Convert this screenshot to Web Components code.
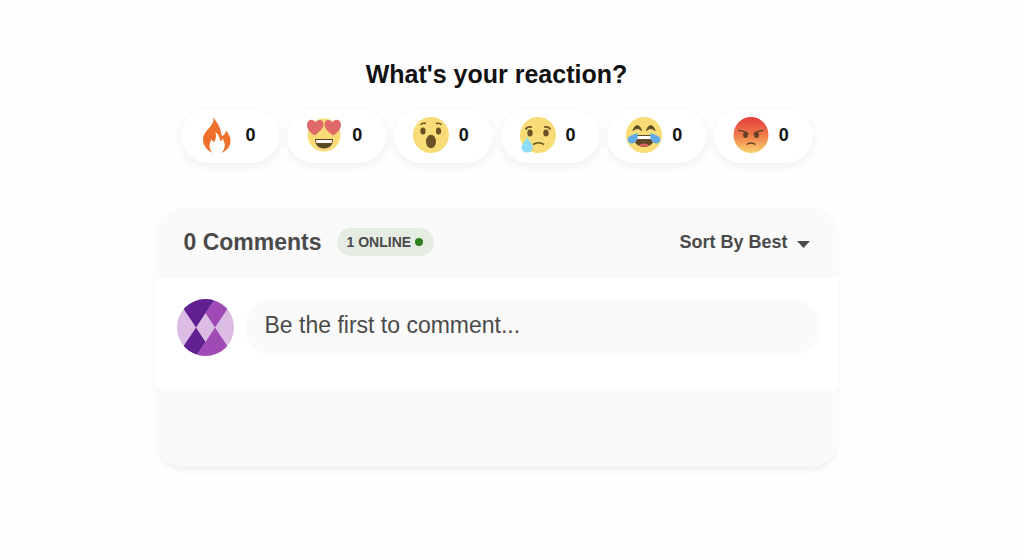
<!DOCTYPE html>
<html lang="en">
<head>
<meta charset="utf-8">
<meta name="viewport" content="width=device-width, initial-scale=1">
<title>Comments</title>
<style>
body {
    margin: 0;
    padding: 59px 31px 40px 0;
    background-color: #fefefe;
    color: #111;
    font-family: "Liberation Sans", Arial, sans-serif;
}
</style>
</head>
<body>

<comments-widget>
    <reaction-bar slot="reactions">
        <span slot="title">What's your reaction?</span>

        <reaction-button count="0" label="Fire">
            <svg viewBox="0 0 36 36">
                <path fill="#ee702a" d="M13.500 0C14.500 3 18 6 19.500 10C21 13 21 17 22 19C24.500 18.500 25.500 16 26 13.500C29 17 31 21 30.500 25C30 30 26.500 33.500 22.500 35.500L12 35.500C6.500 33 3 28 3 22.500C3 17 6.500 14 9.500 10.500C12.500 7 14 4 13.500 0Z"/>
                <path fill="#fff" d="M15.500 15C18 17 20 20 20 24C21.500 24 22 23 22.500 21.500C25 25 25.500 29 24 32C23.500 33.500 22.500 35 21.500 36L12.500 36C9.500 33 9 29 10 26C10.500 24.500 11 23.500 11.500 22C12 23.500 12.500 24.500 14 25C16 22 16.500 19 15.500 15Z"/>
            </svg>
        </reaction-button>

        <reaction-button count="0" label="Love">
            <svg viewBox="0 0 36 36">
                <circle cx="18" cy="18" r="16.500" fill="#f8dc78"/>
                <path fill="#e06a69" d="M8.500 18.500C4 15.500 .5 12 1 7C2 1.500 7.500 1.500 9.500 5.500C12.500 1 18 3 17.500 8C16.500 12.500 12 16 8.500 18.500Z"/>
                <path fill="#e06a69" d="M27.500 18.500C23.500 16 19 12.500 18.500 8C18 3 23.500 1 26.500 5.500C28.500 1.500 34 1.500 35 7C35.500 12 31.500 15.500 27.500 18.500Z"/>
                <path fill="#5b4925" d="M9 22H27C27 27.500 24 31.500 18 31.500C12 31.500 9 27.500 9 22Z"/>
                <path fill="#fff" d="M10 23H26L25.500 26H10.500Z"/>
            </svg>
        </reaction-button>

        <reaction-button count="0" label="Surprised">
            <svg viewBox="0 0 36 36">
                <circle cx="18" cy="18" r="18" fill="#f8dc78"/>
                <g fill="#6a5226">
                    <ellipse cx="10" cy="14" rx="2.600" ry="3.600"/>
                    <ellipse cx="25.500" cy="14" rx="2.600" ry="3.600"/>
                    <ellipse cx="18" cy="24.500" rx="5" ry="6.700"/>
                </g>
                <path d="M7.500 8Q9 5.500 13 6.500M23 6.500Q27 5.500 28.500 8" fill="none" stroke="#6a5226" stroke-width="1.400"/>
            </svg>
        </reaction-button>

        <reaction-button count="0" label="Sad">
            <svg viewBox="0 0 36 36">
                <circle cx="18" cy="18" r="18" fill="#f8dc78"/>
                <g fill="#6a5226">
                    <ellipse cx="10" cy="16" rx="2.700" ry="3.400"/>
                    <ellipse cx="26" cy="16" rx="2.700" ry="3.400"/>
                </g>
                <path d="M5.500 12.500Q7.500 9 12 10M24 10Q28.500 9 30.500 12.500M13 27.500Q18.500 24 24 27.500" fill="none" stroke="#6a5226" stroke-width="1.700"/>
                <path fill="#8edcf8" d="M7.500 20C9 24 12.500 26 12.500 30.500C12.500 33.500 10 35.500 7.500 35.500C4 35.500 1.500 33.500 1.500 30.500C1.500 26.500 6 24 7.500 20Z"/>
            </svg>
        </reaction-button>

        <reaction-button count="0" label="Funny">
            <svg viewBox="0 0 36 36">
                <circle cx="18" cy="18" r="18" fill="#f8dc78"/>
                <path d="M7 13.500C9 7 13.500 7 15.500 13.500Q11 9.500 7 13.500ZM20.500 13.500C22.500 7 27 7 29 13.500Q25 9.500 20.500 13.500Z" fill="#5e4a28" stroke="#5e4a28" stroke-linejoin="round"/>
                <path fill="#5e4a28" d="M8 18H28C29 25 25 30 18 30C11 30 7 25 8 18Z"/>
                <path fill="#fff" d="M10 19H26V22H10Z"/>
                <path fill="#df625e" d="M12.500 28Q18 25 23.500 28Q18 31 12.500 28Z"/>
                <path fill="#62ace8" d="M11.500 16C12.500 21 10.500 26 6 26.500C3 26.500 1 24 2 21C3.500 18 8 17.500 11.500 16ZM24.500 16C28 17.500 32.500 18 34 21C35 24 33 26.500 30 26.500C25.500 26 23.500 21 24.500 16Z"/>
            </svg>
        </reaction-button>

        <reaction-button count="0" label="Angry">
            <svg viewBox="0 0 36 36">
                <defs>
                    <linearGradient id="anger" x1="0" y1="0" x2="0" y2="1">
                        <stop offset="0.050" stop-color="#e6433d"/>
                        <stop offset="0.500" stop-color="#ef7a49"/>
                        <stop offset="1" stop-color="#f9d36d"/>
                    </linearGradient>
                </defs>
                <ellipse cx="18" cy="18" rx="17.500" ry="18" fill="url(#anger)"/>
                <g fill="#64412a">
                    <ellipse cx="12.500" cy="18" rx="2.400" ry="2.900"/>
                    <ellipse cx="23.500" cy="18" rx="2.400" ry="2.900"/>
                </g>
                <path d="M5.500 13.500Q11 13.500 15.500 17M30.500 13.500Q25 13.500 20.500 17M13.500 27.500Q18 24.500 22.500 27.500" fill="none" stroke="#64412a" stroke-width="1.400"/>
            </svg>
        </reaction-button>
    </reaction-bar>

    <comments-panel>
        <span slot="title">0 Comments</span>
        <online-badge slot="status">1 ONLINE</online-badge>
        <sort-menu slot="sort" option="Sort By Best"></sort-menu>
        <comment-composer placeholder="Be the first to comment..."></comment-composer>
    </comments-panel>
</comments-widget>

<template id="comments-widget">
<style>
:host {
    display: flex;
    flex-direction: column;
    gap: 44px;
    max-width: 682px;
    margin: 0 auto;
}
</style>

<slot name="reactions"></slot>
<slot></slot>
</template>

<template id="reaction-bar">
<style>
:host {
    display: block;
    padding: 0 25px;
}

h2 {
    margin: 0 0 20px;
    font-size: 25px;
    line-height: 30px;
    text-align: center;
}

div {
    display: flex;
    gap: 8px;
}
</style>

<h2><slot name="title"></slot></h2>
<div><slot></slot></div>
</template>

<template id="reaction-button">
<style>
:host {
    display: block;
    flex: 1;
}

button {
    display: flex;
    align-items: center;
    gap: 10px;
    width: 100%;
    padding: 8px 19px 10px;
    border: none;
    border-radius: 27px;
    background-color: #fff;
    box-shadow: 0 3px 8px rgba(40, 50, 110, 0.08);
    color: #111;
    font: bold 18px/36px "Liberation Sans", Arial, sans-serif;
    cursor: pointer;
}

::slotted(svg) {
    display: block;
    flex: none;
    width: 36px;
    height: 36px;
}
</style>

<button type="button">
    <slot></slot>
    <span></span>
</button>
</template>

<template id="comments-panel">
<style>
:host {
    display: block;
    border-radius: 28px;
    overflow: hidden;
    background-color: #fff;
    box-shadow: 0 4px 6px -2px rgba(40, 50, 110, 0.10);
    color: #4a4a4a;
}

header {
    display: flex;
    align-items: center;
    gap: 15px;
    padding: 19px 28px 20px;
    background-color: #fafafa;
}

h3 {
    margin: 0;
    font-size: 23px;
    line-height: 32px;
}

slot[name="sort"] {
    display: block;
    margin-left: auto;
}

section {
    padding: 21px 18px 33px 21px;
}

footer {
    height: 78px;
    background-color: #fafafa;
}
</style>

<header>
    <h3><slot name="title"></slot></h3>
    <slot name="status"></slot>
    <slot name="sort"></slot>
</header>
<section><slot></slot></section>
<footer></footer>
</template>

<template id="online-badge">
<style>
:host {
    display: flex;
    align-items: center;
    gap: 4px;
    padding: 0 11px 0 10px;
    border-radius: 14px;
    background-color: #e5ede3;
    font-size: 14px;
    font-weight: bold;
    line-height: 28px;
}

i {
    width: 8px;
    height: 8px;
    border-radius: 50%;
    background-color: #2f8020;
}
</style>

<span><slot></slot></span>
<i></i>
</template>

<template id="sort-menu">
<style>
:host {
    display: block;
}

label {
    display: flex;
    align-items: center;
    gap: 8px;
}

select {
    appearance: none;
    margin: 0;
    padding: 0;
    border: none;
    background: none;
    color: inherit;
    font: bold 18px/24px "Liberation Sans", Arial, sans-serif;
    cursor: pointer;
}

svg {
    width: 13px;
    height: 7px;
    margin-top: 4px;
}
</style>

<label>
    <select aria-label="Sort comments"><option></option></select>
    <svg viewBox="0 0 13 7"><path d="M0 0H13L6.500 7Z" fill="#4a4a4a"/></svg>
</label>
</template>

<template id="comment-composer">
<style>
:host {
    display: flex;
    align-items: center;
    gap: 11px;
}

svg {
    flex: none;
    width: 57px;
    height: 57px;
    border-radius: 50%;
}

input {
    flex: 1;
    min-width: 0;
    height: 57px;
    box-sizing: border-box;
    padding: 0 20px 4px;
    border: none;
    border-radius: 29px;
    background-color: #fafafa;
    color: #4a4a4a;
    font: 23px "Liberation Sans", Arial, sans-serif;
}

input::placeholder {
    color: #4a4a4a;
    opacity: 1;
}
</style>

<svg viewBox="0 0 57 57" aria-hidden="true">
    <path fill="#dbbce3" d="M0 0H57V57H0Z"/>
    <path fill="#a04bb5" d="M38 0H57L38 28.500L57 57H19L28.500 43L38 28.500L28.500 14Z"/>
    <path fill="#602092" d="M0 0H38L28.500 14L19 28.500L28.500 43L19 57H0L19 28.500Z"/>
</svg>
<input type="text">
</template>

<script>
class TemplateElement extends HTMLElement {
    connectedCallback() {
        if (this.shadowRoot) {
            return
        }

        const template = document.getElementById(this.localName)
        const shadow = this.attachShadow({ mode: 'open' })
        shadow.appendChild(template.content.cloneNode(true))
        this.render(shadow)
    }

    render() {}
}

class CommentsWidget extends TemplateElement {}

class ReactionBar extends TemplateElement {}

class ReactionButton extends TemplateElement {
    render(shadow) {
        const button = shadow.querySelector('button')
        const count = shadow.querySelector('span')

        button.title = this.getAttribute('label')
        count.textContent = this.getAttribute('count')

        button.addEventListener('click', () => {
            const active = this.toggleAttribute('data-active')
            count.textContent = Number(count.textContent) + (active ? 1 : -1)
        })
    }
}

class CommentsPanel extends TemplateElement {}

class OnlineBadge extends TemplateElement {}

class SortMenu extends TemplateElement {
    render(shadow) {
        shadow.querySelector('option').textContent = this.getAttribute('option')
    }
}

class CommentComposer extends TemplateElement {
    render(shadow) {
        const input = shadow.querySelector('input')
        input.placeholder = this.getAttribute('placeholder')
        input.setAttribute('aria-label', 'Comment')
    }
}

customElements.define('comments-widget', CommentsWidget)
customElements.define('reaction-bar', ReactionBar)
customElements.define('reaction-button', ReactionButton)
customElements.define('comments-panel', CommentsPanel)
customElements.define('online-badge', OnlineBadge)
customElements.define('sort-menu', SortMenu)
customElements.define('comment-composer', CommentComposer)
</script>
</body>
</html>
